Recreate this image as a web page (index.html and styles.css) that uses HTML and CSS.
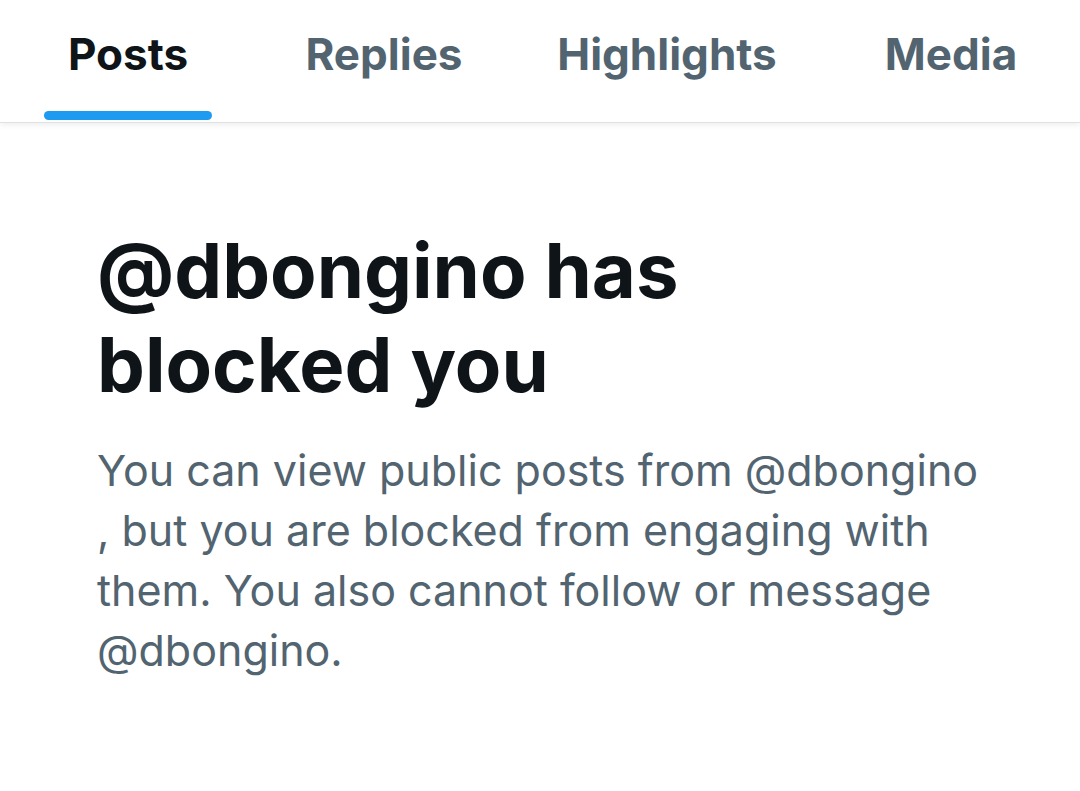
FILE: index.html
```html
<!DOCTYPE html>
<html>
<head>
<meta charset="utf-8">
<link rel="stylesheet" href="styles.css">
</head>
<body>
<nav class="tabs">
  <div class="tab active"><span class="label">Posts</span><span class="bar"></span></div>
  <div class="tab"><span class="label">Replies</span></div>
  <div class="tab"><span class="label">Highlights</span></div>
  <div class="tab"><span class="label">Media</span></div>
</nav>
<main class="content">
  <h1 class="title">@dbongino has blocked you</h1>
  <p class="desc">You can view public posts from @dbongino<br>, but you are blocked from engaging with them. You also cannot follow or message @dbongino.</p>
</main>
</body>
</html>
```
FILE: styles.css
```css
html, body {
  margin: 0;
  padding: 0;
  background: #ffffff;
}
body {
  width: 1080px;
  height: 791px;
  overflow: hidden;
  font-family: "Inter", "Liberation Sans", sans-serif;
}
.tabs {
  display: grid;
  grid-template-columns: 256px 256px 310px 258px;
  height: 122px;
  border-bottom: 1px solid #dfe1e3;
  box-shadow: 0 2px 6px rgba(0, 0, 0, 0.07);
  position: relative;
  z-index: 1;
}
.tab {
  position: relative;
  display: flex;
  justify-content: center;
  align-items: flex-start;
  padding-top: 28px;
  box-sizing: border-box;
}
.label {
  font-size: 44px;
  font-weight: 700;
  color: #536471;
  line-height: 52px;
}
.tab.active .label {
  color: #0f1419;
}
.bar {
  position: absolute;
  left: 44px;
  width: 168px;
  top: 111px;
  height: 9px;
  border-radius: 5px;
  background: #1d9bf0;
}
.content {
  width: 900px;
  padding: 0 0 0 97px;
}
.title {
  margin: 100px 0 0 0;
  max-width: 700px;
  font-size: 76px;
  font-weight: 700;
  line-height: 94px;
  color: #0f1419;
}
.desc {
  margin: 29px 0 0 0;
  font-size: 43px;
  line-height: 60px;
  color: #536471;
}
```
